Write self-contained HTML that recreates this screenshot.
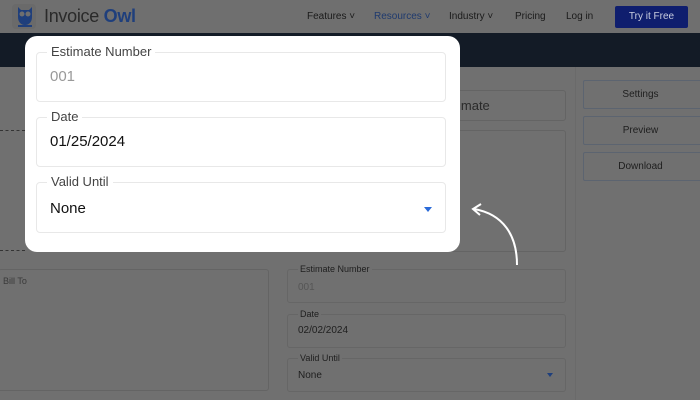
<!DOCTYPE html>
<html style="background:#707070"><head><meta charset="utf-8"><style>
*{box-sizing:border-box;margin:0;padding:0}
html,body{background:#707070}
body{width:700px;height:400px;overflow:hidden;font-family:"Liberation Sans",sans-serif;position:relative}
.a{position:absolute}
.bg{left:0;top:0;width:700px;height:400px;background:#707070}
.nav{left:0;top:0;width:700px;height:33px;background:#6f6f6f}
.band{left:0;top:33px;width:700px;height:34px;background:#131b26}
.nl{font-size:10px;color:#1a1a1a;top:11px}
.bx{border:1px solid #646464;border-radius:3px}
.btn{left:583px;width:130px;height:29px;border:1px solid #5c6470;border-radius:2px;font-size:10px;color:#1e1e1e;text-align:center;line-height:27px;padding-right:15px}
.modal{left:25px;top:36px;width:435px;height:216px;background:#fff;border-radius:12px}
.f{left:11px;width:410px;border:1px solid #e8e8e8;border-radius:4px}
.lab{position:absolute;left:10px;top:-9px;background:#fff;padding:0 4px;font-size:13px;color:#444}
.val{position:absolute;left:13px;font-size:15px}
.sf{left:287px;width:279px;border:1px solid #666;border-radius:3px}
.sl{position:absolute;left:10px;top:-6px;font-size:9px;color:#1e1e1e;background:#707070;padding:0 2px}
.sv{position:absolute;left:10px;font-size:10px;color:#1e1e1e}
</style></head><body>
<div class="a bg"></div>
<div class="a nav"></div>
<div class="a" style="left:12px;top:4px;width:24px;height:25px;border-radius:4px;background:#6a6a6a"></div>
<svg class="a" style="left:16px;top:6px" width="18" height="22" viewBox="0 0 18 22"><path d="M2 1l3 3h8l3-3v10c0 5-3 8-7 8s-7-3-7-8z" fill="#1f3f7c"/><circle cx="6" cy="8" r="2.5" fill="#6f6f6f"/><circle cx="12" cy="8" r="2.5" fill="#6f6f6f"/><rect x="2" y="19" width="14" height="2" fill="#1f3f7c"/></svg>
<div class="a" style="left:44px;top:6px;font-size:18px;color:#2a2a2a;letter-spacing:-0.3px">Invoice <b style="color:#1f3f7c">Owl</b></div>
<div class="a nl" style="left:307px">Features ˅</div>
<div class="a nl" style="left:374px;color:#1f3a6e">Resources ˅</div>
<div class="a nl" style="left:449px">Industry ˅</div>
<div class="a nl" style="left:515px">Pricing</div>
<div class="a nl" style="left:566px">Log in</div>
<div class="a" style="left:615px;top:6px;width:73px;height:22px;background:#0f1e6e;border-radius:2px;color:#c9cde0;font-size:10px;text-align:center;line-height:22px">Try it Free</div>
<div class="a band"></div>
<div class="a bx" style="left:287px;top:90px;width:279px;height:31px;font-size:13px;color:#2a2a2a;padding:7px 0 0 170px">imate</div>
<div class="a bx" style="left:287px;top:130px;width:279px;height:122px"></div>
<div class="a btn" style="top:80px">Settings</div>
<div class="a btn" style="top:116px">Preview</div>
<div class="a btn" style="top:152px">Download</div>
<div class="a" style="left:575px;top:67px;width:1px;height:333px;background:#6a6a6a"></div>
<div class="a" style="left:0;top:130px;width:25px;border-top:1px dashed #333"></div>
<div class="a" style="left:0;top:250px;width:25px;border-top:1px dashed #333"></div>
<div class="a bx" style="left:-2px;top:269px;width:271px;height:122px"><span style="position:absolute;left:4px;top:6px;font-size:9px;color:#3a3a3a">Bill To</span></div>
<div class="a sf" style="top:269px;height:34px"><span class="sl">Estimate Number</span><span class="sv" style="top:12px;color:#555">001</span></div>
<div class="a sf" style="top:314px;height:34px"><span class="sl">Date</span><span class="sv" style="top:10px">02/02/2024</span></div>
<div class="a sf" style="top:358px;height:34px"><span class="sl">Valid Until</span><span class="sv" style="top:11px">None</span><span style="position:absolute;right:12px;top:14px;border:3px solid transparent;border-top:4px solid #1f3f7c"></span></div>
<svg class="a" style="left:465px;top:200px" width="60" height="70" viewBox="0 0 60 70"><path d="M52 65C52 35 38 14 9 9" stroke="#fff" stroke-width="2" fill="none"/><path d="M16 4L8 9l7 6" stroke="#fff" stroke-width="2" fill="none"/></svg>
<div class="a modal">
<div class="a f" style="top:16px;height:50px"><span class="lab">Estimate Number</span><span class="val" style="top:15px;color:#999">001</span></div>
<div class="a f" style="top:81px;height:50px"><span class="lab">Date</span><span class="val" style="top:15px;color:#111">01/25/2024</span></div>
<div class="a f" style="top:146px;height:51px"><span class="lab">Valid Until</span><span class="val" style="top:17px;color:#111">None</span><span style="position:absolute;right:13px;top:24px;border:4px solid transparent;border-top:5px solid #2a6ad8"></span></div>
</div>
</body></html>
